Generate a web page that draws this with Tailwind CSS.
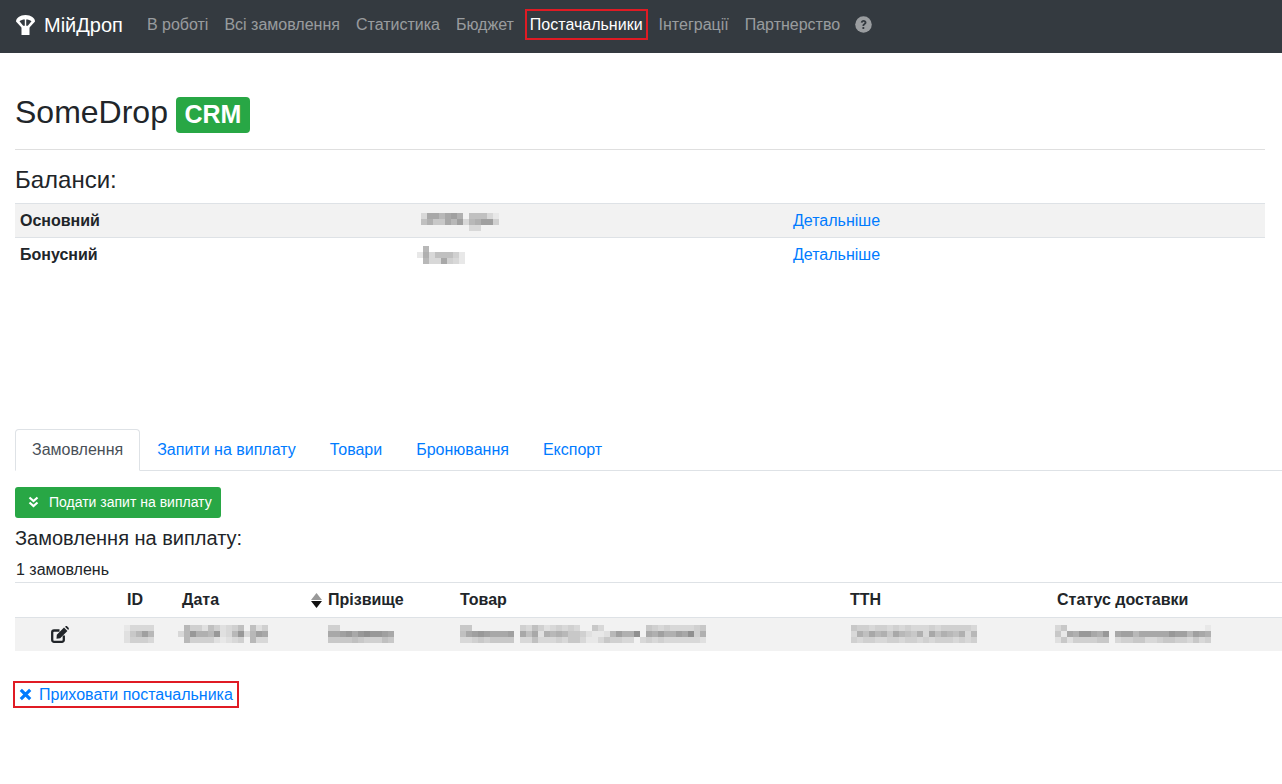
<!DOCTYPE html>
<html lang="uk">
<head>
  <meta charset="UTF-8">
  <title>SomeDrop CRM</title>
  <script src="https://cdn.jsdelivr.net/npm/@tailwindcss/browser@4"></script>
</head>
<body class="bg-white text-[#212529] text-base font-['Liberation_Sans',Arial,sans-serif] overflow-x-hidden">
  <!-- Навігація -->
  <nav class="h-[53px] bg-[#343a40] flex items-center pl-4 pb-1">
    <a class="flex items-center text-white text-xl mr-4">
      <svg class="w-[19px] h-[20px] mr-[9px]" viewBox="0 0 19 20">
        <path d="M9.500 0C4 0 0 3 0 6.500L5.500 12.500H13.500L19 6.500C19 3 15 0 9.500 0Z" fill="#fff"/>
        <path d="M3.500 6.300C5 5 6.800 4.500 8.800 4.500V10.800H7.200ZM15.500 6.300C14 5 12.200 4.500 10.200 4.500V10.800H11.800Z" fill="#343a40"/>
        <rect x="5.500" y="12" width="8" height="8" fill="#fff"/>
      </svg>
      МійДроп
    </a>
    <ul class="flex items-center text-white/50">
      <li class="px-2">В роботі</li>
      <li class="px-2">Всі замовлення</li>
      <li class="px-2">Статистика</li>
      <li class="px-2">Бюджет</li>
      <li class="px-[5px] py-[5px] mx-[3px] text-white outline-2 -outline-offset-2 outline-[#e01b24] leading-[21px]">Постачальники</li>
      <li class="px-2">Інтеграції</li>
      <li class="px-2">Партнерство</li>
      <li class="pl-2">
        <svg class="w-[17px] h-[17px] -ml-px" viewBox="0 0 16 16">
          <circle cx="8" cy="8" r="7.800" fill="#ffffff80"/>
          <path d="M5.400 6.200C5.600 4.700 6.700 3.700 8.100 3.700c1.500 0 2.700.9 2.700 2.400 0 1.100-.7 1.700-1.400 2.100-.5.300-.7.500-.7 1.100H7c0-1.200.4-1.700 1.100-2.100.5-.3.900-.5.900-1s-.4-.8-.9-.8-.9.300-1 .9zM7 10.300h1.700V12.200H7z" fill="#343a40"/>
        </svg>
      </li>
    </ul>
  </nav>

  <main class="pl-[15px] pr-[17px]">
    <div class="pt-[44px] pb-4 border-b border-[#dfdfdf] flex items-center h-[97px]">
      <h1 class="text-[32px] leading-none mb-[6px]">SomeDrop</h1>
      <span class="ml-2 w-[74px] h-9 rounded bg-[#28a745] text-white font-bold text-[25px] flex items-center justify-center">CRM</span>
    </div>

    <h2 class="text-2xl leading-[29px] mt-[15px] mb-[9px]">Баланси:</h2>
    <table class="w-full table-fixed border-collapse">
      <tr class="bg-[#f2f2f2] h-[34px] border-y border-[#dee2e6]">
        <td class="w-[400px] px-[5px] font-bold">Основний</td>
        <td class="w-[373px] px-[5px]"><svg class="mosaic block h-[18px] ml-px mt-[2px]" data-rows="c668657f999ce|97aa685c8755b|ffffffffccfff"></svg></td>
        <td class="px-[5px]"><a class="text-[#007bff]">Детальніше</a></td>
      </tr>
      <tr class="h-[34px]">
        <td class="px-[5px] font-bold">Бонусний</td>
        <td class="px-[5px]"><svg class="mosaic block h-[18px] -ml-[3px]" data-rows="f8ffffff|e7c999be|f8cc6bce"></svg></td>
        <td class="px-[5px]"><a class="text-[#007bff]">Детальніше</a></td>
      </tr>
    </table>

    <!-- Вкладки -->
    <ul class="mt-[157px] -mr-[17px] h-[42px] flex border-b border-[#dee2e6] text-[#007bff]">
      <li class="h-[42px] px-4 flex items-center rounded-t border border-[#dee2e6] border-b-white bg-white text-[#495057]">Замовлення</li>
      <li class="h-[42px] px-[17px] flex items-center">Запити на виплату</li>
      <li class="h-[42px] px-[17px] flex items-center">Товари</li>
      <li class="h-[42px] px-[17px] flex items-center">Бронювання</li>
      <li class="h-[42px] px-[17px] flex items-center">Експорт</li>
    </ul>

    <button class="mt-4 h-[31px] w-[206px] rounded-[3px] bg-[#28a745] text-white text-sm flex items-center pl-[13px]">
      <svg class="w-[11px] h-[12px] mr-[10px]" viewBox="0 0 11 12" fill="none" stroke="#fff" stroke-width="2.200">
        <path d="M1.500 1.500l4 3.500 4-3.500M1.500 6.500l4 3.500 4-3.500"/>
      </svg>
      Подати запит на виплату
    </button>
    <h5 class="text-xl leading-6 mt-2">Замовлення на виплату:</h5>
    <p class="leading-[21px] mt-[9px] ml-px">1 замовлень</p>

    <div class="-mr-[17px] mt-[2px]">
      <table class="w-[1267px] table-fixed border-collapse">
        <thead>
          <tr class="h-[35px] border-y border-[#dee2e6] font-bold text-left">
            <th class="w-[107px]"></th>
            <th class="w-[55px] px-[5px]">ID</th>
            <th class="w-[129px] px-[5px]">Дата</th>
            <th class="w-[149px] px-[5px]">
              <span class="flex items-center gap-[6px]">
                <svg class="w-[11px] h-[17px] mt-px" viewBox="0 0 11 17"><path d="M5.500 1L11 8H0z" fill="#999"/><path d="M5.500 16L0 9h11z" fill="#111"/></svg>
                Прізвище
              </span>
            </th>
            <th class="w-[390px] px-[5px]">Товар</th>
            <th class="w-[207px] px-[5px]">ТТН</th>
            <th class="px-[5px]">Статус доставки</th>
          </tr>
        </thead>
        <tbody>
          <tr class="h-[34px] bg-[#f2f2f2]">
            <td class="pl-[36px]">
              <svg class="w-[18px] h-[17px] block" viewBox="0 0 18 17">
                <path d="M8.500 4.500H3A1.800 1.800 0 0 0 1.200 6.300V14A1.800 1.800 0 0 0 3 15.800H11A1.800 1.800 0 0 0 12.800 14V9.500" fill="none" stroke="#212529" stroke-width="2.300"/>
                <path d="M5.800 8.800L13 1.600L16.400 5L9.200 12.200L5.500 12.700ZM14 .7L15 0H15.800L17.800 2V3L17.200 4Z" fill="#212529"/>
              </svg>
            </td>
            <td class="px-[5px]"><svg class="mosaic block h-[18px] -ml-[3px]" data-rows="ecccc|da858|dbbbc"></svg></td>
            <td class="px-[5px]"><svg class="mosaic block h-[18px] -ml-1" data-rows="f8bbd9bdcb9f9db|c84778 4dc84c856|f8bbbbdedcbf8cc"></svg></td>
            <td class="px-[5px]"><svg class="mosaic block h-[18px] ml-[17px]" data-rows="bbfffffffff|66546434456|aaaa9abbb9a"></svg></td>
            <td class="px-[5px]"><svg class="mosaic block h-[18px]" data-rows="aaffffffffbc9bdcbcbcffacfffffffabcbccccbad|96545666 5f696d787 8aabdeed85773f67577563b7a|ccbabaaaafcc9cccbcaaceecabbccfcbcbccccccd"></svg></td>
            <td class="px-[5px]"><svg class="mosaic block h-[18px] ml-px" data-rows="abbcbbcbcbcccbcbbbbbc|c79687a689a7c697897c8|bcbbccbbcbbcbcbbbcbcb"></svg></td>
            <td class="px-[5px]"><svg class="mosaic block h-[18px] -ml-[2px]" data-rows="cafffffffffffffffffffffffe|ae674467 4f6558666664558567|dadbbbbaafcbbaaccbaabbcacb"></svg></td>
          </tr>
        </tbody>
      </table>
    </div>

    <a class="mt-[30px] -ml-[2px] w-[226px] h-[27px] flex items-center outline-2 -outline-offset-2 outline-[#e01b24] text-[#007bff] pl-[6px]">
      <svg class="w-[13px] h-[13px] mr-[7px]" viewBox="0 0 13 13" fill="none" stroke="#007bff" stroke-width="3.200"><path d="M1.800 1.800l9.400 9.400M11.200 1.800l-9.400 9.400"/></svg>
      Приховати постачальника
    </a>
  </main>

  <script>
    // Розмиті значення: сітка клітинок 6px, рівень сірого з даних
    const NS = "http://www.w3.org/2000/svg";
    document.querySelectorAll(".mosaic").forEach(svg => {
      const rows = svg.dataset.rows.replace(/ /g, "").split("|");
      const cols = Math.min(41, Math.max(...rows.map(r => r.length)));
      svg.setAttribute("width", cols * 6);
      svg.setAttribute("height", 18);
      rows.forEach((row, y) => {
        [...row].slice(0, cols).forEach((c, x) => {
          if (c === "f") return;
          const g = 120 + parseInt(c, 16) * 8;
          const r = document.createElementNS(NS, "rect");
          r.setAttribute("x", x * 6);
          r.setAttribute("y", y * 6);
          r.setAttribute("width", 6);
          r.setAttribute("height", 6);
          r.setAttribute("fill", `rgb(${g},${g},${g})`);
          svg.appendChild(r);
        });
      });
    });
  </script>
</body>
</html>
